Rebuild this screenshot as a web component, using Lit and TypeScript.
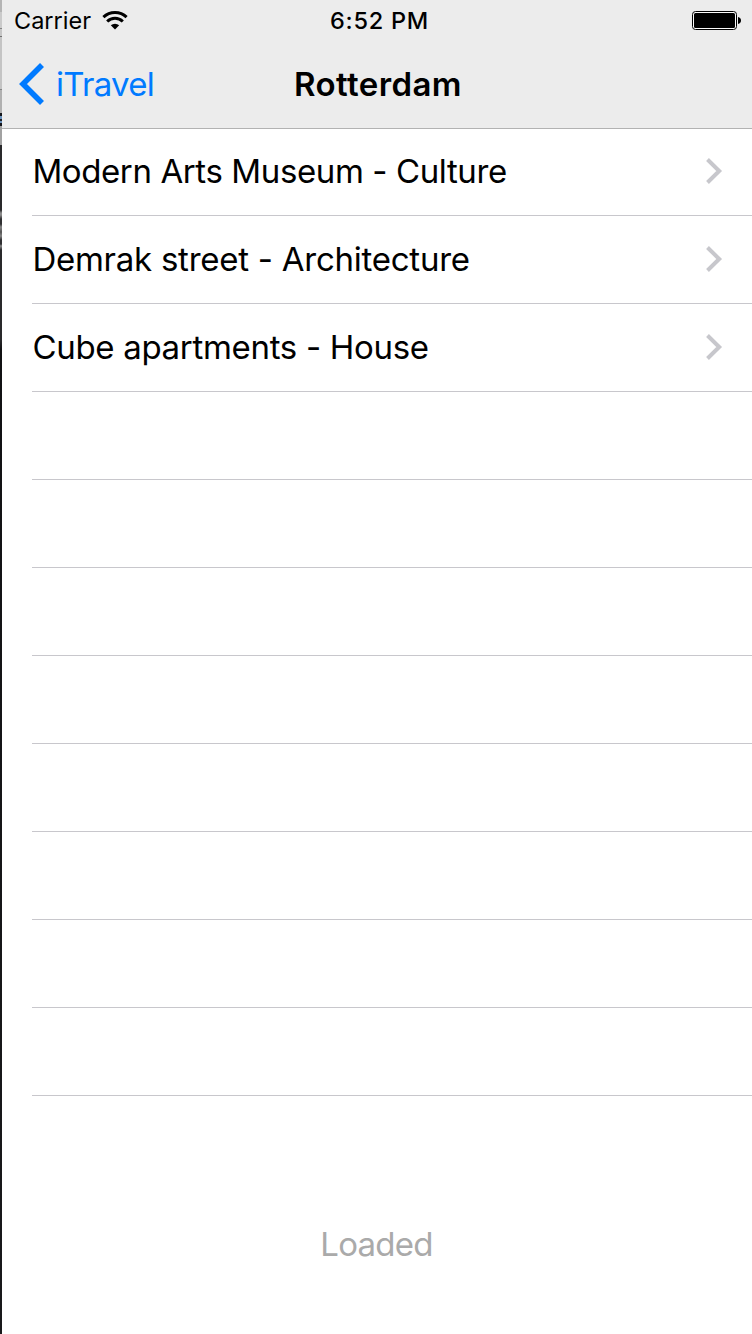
import { LitElement, html, css } from "lit";
import { customElement } from "lit/decorators.js";

const PLACES = [
  { label: "Modern Arts Museum - Culture", kind: "museum" },
  { label: "Demrak street - Architecture", kind: "street" },
  { label: "Cube apartments - House", kind: "cube" },
];
const EMPTY_ROWS = 8;

@customElement("app-root")
export class AppRoot extends LitElement {
  static styles = css`
    :host {
      display: flex;
      width: 752px;
      height: 1334px;
      overflow: hidden;
      background: #fff;
      color: #000;
      font-family: Inter, "Liberation Sans", sans-serif;
      font-size: 33px;
      white-space: nowrap;
    }
    svg { display: block; flex: none; }
    .edge {
      flex: none;
      width: 2px;
      background: linear-gradient(
        #b4b4b4 0 12px, #cacaca 12px 28px, #858585 28px 29px, #c6c6c6 29px 36px,
        #707070 36px 37px, #c4c4c4 37px 89px, #858585 89px 90px, #b0b0b0 90px 113px,
        #15171c 113px 116px, #6b92bd 116px 119px, #20242b 119px 121px, #6b92bd 121px 123px,
        #15171c 123px 126px, #a2a2a2 126px 145px, #29292b 145px 210px, #8b8b8b 213px 215px,
        #303032 219px 224px, #858585 227px, #555 232px, #858585 236px, #303032 240px 244px,
        #8b8b8b 246px, #29292b 250px 340px, #111113 350px, #19191b 100%
      );
    }
    .screen { flex: 1; display: flex; flex-direction: column; min-width: 0; }
    header { flex: none; height: 128px; background: #ececec; border-bottom: 1px solid #b2b2b2; }
    .status, .nav {
      display: grid;
      grid-template-columns: 1fr auto 1fr;
      align-items: center;
    }
    .status { height: 41px; font-size: 23.5px; line-height: 41px; }
    .carrier { display: flex; align-items: center; gap: 10.5px; padding-left: 12px; }
    .time { font-weight: 500; letter-spacing: 0.75px; padding-left: 5px; }
    .battery { justify-self: end; padding: 0 11px 0 0; }
    .nav { height: 86px; line-height: 86px; }
    .back { display: flex; align-items: center; gap: 12px; padding-left: 16px; color: #007aff; letter-spacing: -0.7px; }
    .title { font-weight: 600; letter-spacing: 0.4px; padding-left: 2px; }
    .list { flex: none; margin: -1px 0 0; padding: 0 0 0 30px; list-style: none; }
    .row {
      box-sizing: border-box;
      display: flex;
      align-items: center;
      justify-content: space-between;
      height: 88px;
      padding: 0 29px 1px 0.4px;
      border-bottom: 1px solid #c8c7cc;
      line-height: 86px;
    }
    .museum { letter-spacing: -0.39px; }
    .street { letter-spacing: -0.25px; }
    .cube { letter-spacing: -0.31px; }
    .state {
      margin-top: 105px;
      padding-right: 1px;
      line-height: 86px;
      text-align: center;
      letter-spacing: -0.75px;
      color: #aaa;
    }
  `;

  render() {
    return html`
      <div class="edge"></div>
      <div class="screen">
        <header>
          <div class="status">
            <div class="carrier">
              <span>Carrier</span>
              <svg width="26" height="19" viewBox="0 0 26 19" fill="none" stroke="#000" stroke-width="3">
                <path d="M1.400 6.200a16.800 16.800 0 0 1 23.200 0" />
                <path d="M5.200 10.500a11.200 11.200 0 0 1 15.600 0" />
                <path d="M8.800 14.300a6.200 6.200 0 0 1 8.400 0L13 18.500z" fill="#000" stroke="none" />
              </svg>
            </div>
            <div class="time">6:52 PM</div>
            <svg class="battery" width="49" height="19" viewBox="0 0 49 19">
              <rect x=".5" y=".5" width="44" height="18" rx="3" fill="#fbfbfb" stroke="#000" />
              <rect x="2" y="2" width="41" height="15" rx="1.5" />
              <path d="M46 6c4 .5 4 6.500 0 7z" />
            </svg>
          </div>
          <div class="nav">
            <div class="back">
              <svg width="26" height="42" viewBox="0 0 26 42" fill="none" stroke="#007aff" stroke-width="5.600">
                <path d="M24 2L5 21l19 19" />
              </svg>
              <span>iTravel</span>
            </div>
            <div class="title">Rotterdam</div>
            <div></div>
          </div>
        </header>
        <ul class="list">
          ${PLACES.map(
            (p) => html`<li class="row">
              <span class=${p.kind}>${p.label}</span>
              <svg width="17" height="26" viewBox="0 0 17 26" fill="none" stroke="#c7c7cc" stroke-width="4">
                <path d="M1.500 1.500L13.200 13 1.500 24.500" />
              </svg>
            </li>`
          )}
          ${Array.from({ length: EMPTY_ROWS }, () => html`<li class="row"></li>`)}
        </ul>
        <div class="state">Loaded</div>
      </div>
    `;
  }
}
